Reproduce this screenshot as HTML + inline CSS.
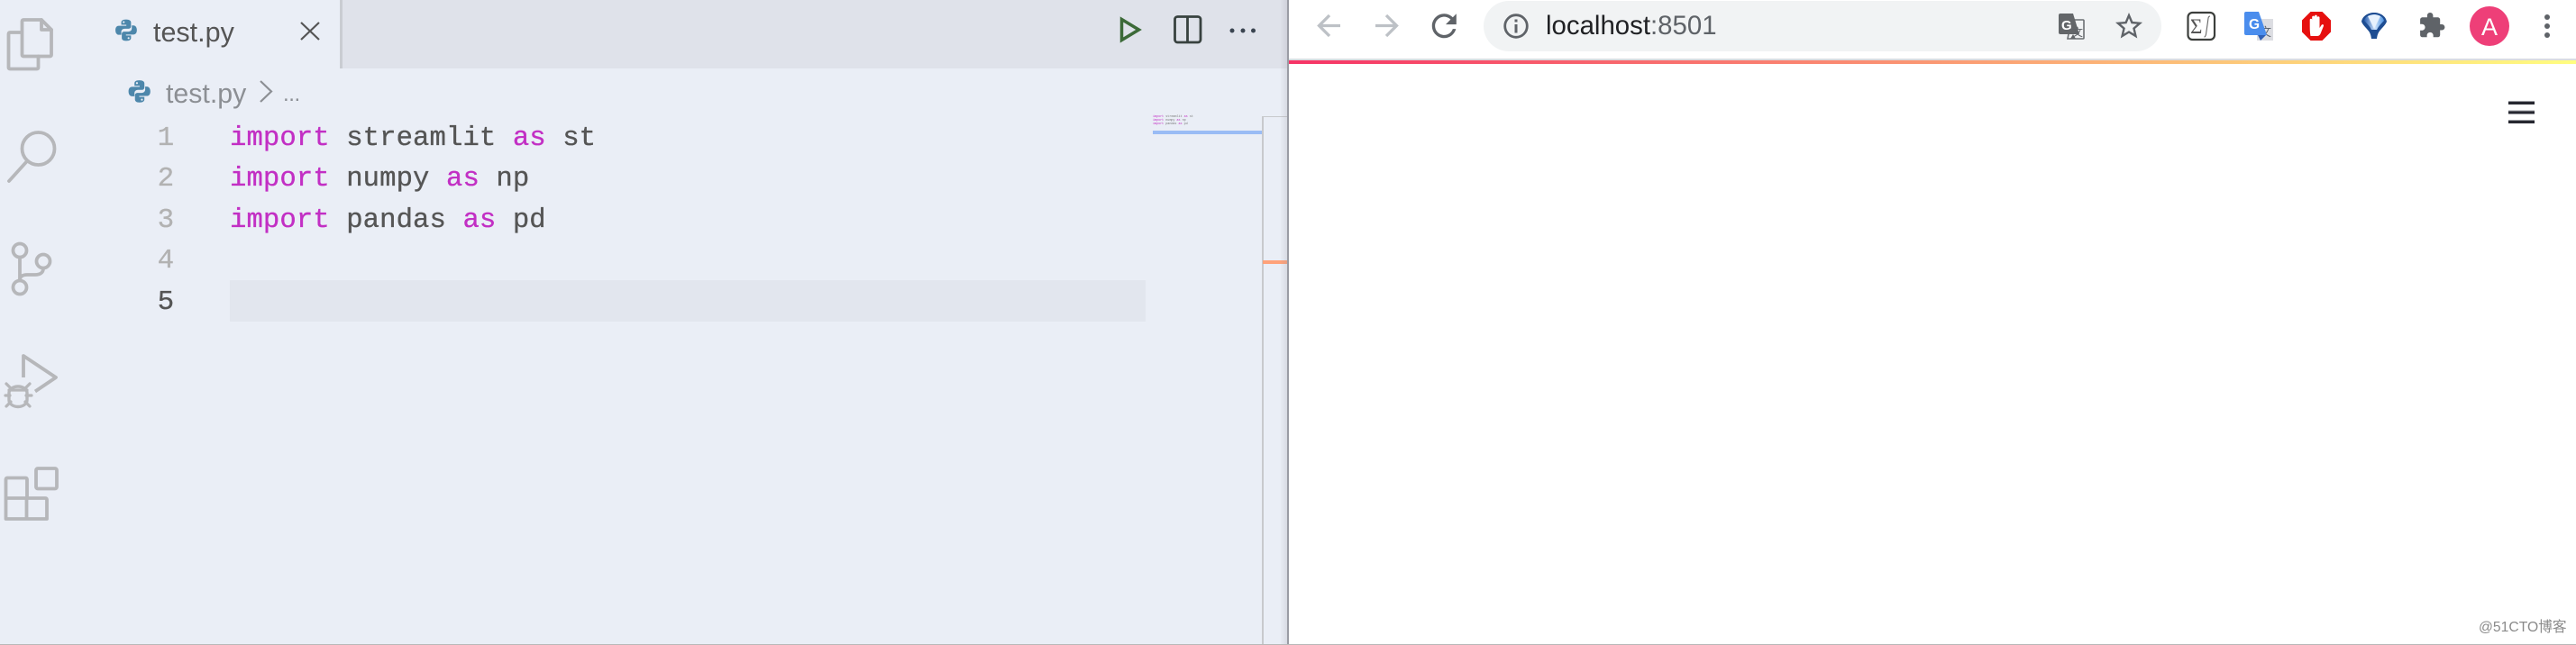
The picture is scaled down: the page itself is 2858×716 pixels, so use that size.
<!DOCTYPE html>
<html>
<head>
<meta charset="utf-8">
<style>
html,body{margin:0;padding:0;width:2858px;height:716px;overflow:hidden;background:#fff;}
.a{position:absolute;white-space:pre;}
.m{font-family:"Liberation Mono",monospace;font-size:30.6px;letter-spacing:.1px;line-height:46px;color:#555;-webkit-text-stroke:.35px currentColor;}
.k{color:#c22fc4;}
.n{color:#b2b2b2;width:40px;text-align:center;left:164px;}
.s{font-family:"Liberation Sans",sans-serif;}
.mini{font-family:"Liberation Mono",monospace;font-size:3.4px;line-height:4px;color:#777;left:1279px;}
.mini b{font-weight:normal;color:#c22fc4;}
</style>
</head>
<body>
<div class="a" style="left:0;top:0;width:1430px;height:716px;background:#eaeef6;"></div>
<div class="a" style="left:378px;top:0;width:1052px;height:76px;background:#dfe2ea;"></div>
<div class="a" style="left:377px;top:0;width:3px;height:76px;background:#c9ccd2;"></div>
<div class="a" style="left:255px;top:311px;width:1016px;height:46px;background:#e2e6ee;"></div>
<div class="a" style="left:1279px;top:145px;width:121px;height:4px;background:#9abcf5;"></div>
<div class="a" style="left:1400px;top:129px;width:1.5px;height:587px;background:#c8c9cc;"></div>
<div class="a" style="left:1400px;top:129px;width:28px;height:1px;background:#c8c9cc;"></div>
<div class="a" style="left:1401px;top:289px;width:28px;height:4px;background:#ffa27a;"></div>
<div class="a" style="left:1420px;top:0;width:8px;height:716px;background:linear-gradient(90deg,rgba(150,150,160,0),rgba(150,150,160,.22));"></div>
<div class="a" style="left:1428px;top:0;width:2px;height:716px;background:#9a9ca4;"></div>

<div class="a s" style="left:170px;top:16px;font-size:30.5px;line-height:40px;color:#555;">test.py</div>
<div class="a s" style="left:184px;top:85px;font-size:30.3px;line-height:40px;color:#8c8f94;">test.py</div>
<div class="a s" style="left:314px;top:85px;font-size:24px;line-height:40px;color:#8c8f94;letter-spacing:-.4px;">...</div>

<div class="a m n" style="top:131px;">1</div>
<div class="a m n" style="top:176px;">2</div>
<div class="a m n" style="top:222px;">3</div>
<div class="a m n" style="top:267px;">4</div>
<div class="a m n" style="top:313px;color:#555;">5</div>
<div class="a m" style="left:255px;top:131px;"><span class="k">import</span> streamlit <span class="k">as</span> st</div>
<div class="a m" style="left:255px;top:176px;"><span class="k">import</span> numpy <span class="k">as</span> np</div>
<div class="a m" style="left:255px;top:222px;"><span class="k">import</span> pandas <span class="k">as</span> pd</div>

<div class="a mini" style="top:128px;"><b>import</b> streamlit <b>as</b> st</div>
<div class="a mini" style="top:132px;"><b>import</b> numpy <b>as</b> np</div>
<div class="a mini" style="top:136px;"><b>import</b> pandas <b>as</b> pd</div>

<!-- browser -->
<div class="a" style="left:1430px;top:65px;width:1428px;height:2px;background:#dadce0;"></div>
<div class="a" style="left:1430px;top:67px;width:1428px;height:4px;background:linear-gradient(90deg,#f63366,#fffd80);"></div>
<div class="a" style="left:1646px;top:1px;width:752px;height:56px;border-radius:28px;background:#f1f3f4;"></div>
<div class="a s" style="left:1715px;top:9px;font-size:29.4px;line-height:40px;color:#202124;">localhost<span style="color:#5f6368;">:8501</span></div>

<svg class="a" style="left:0;top:0;" width="2858" height="716" viewBox="0 0 2858 716" xmlns="http://www.w3.org/2000/svg">
<defs>
<g id="py">
<path fill="#4d87ab" d="M12 1C8 1 7 2.5 7 4v2.5h5.2v1H4.5C2.5 7.5 1 9 1 12s1.500 4.800 3.500 4.800H7v-3c0-2 1.500-3.300 3.500-3.300h4c1.500 0 2.500-1 2.500-2.500V4c0-1.500-1.500-3-5-3z"/>
<path fill="#4d87ab" d="M12 23c4 0 5-1.500 5-3v-2.500h-5.200v-1h7.700c2 0 3.500-1.500 3.500-4.500s-1.500-4.800-3.500-4.800H17.800v3c0 2-1.500 3.300-3.500 3.300h-4.300C8.500 13.500 7.500 14.500 7.500 16v4c0 1.500 1 3 4.500 3z"/>
<circle cx="9.500" cy="3.800" r="1" fill="#eaeef6"/><circle cx="14.500" cy="20.200" r="1" fill="#eaeef6"/>
</g>
<linearGradient id="fn" x1="0" y1="0" x2="1" y2="0"><stop offset="0" stop-color="#2a5fb0"/><stop offset=".55" stop-color="#cfe4fb"/><stop offset="1" stop-color="#4a90e0"/></linearGradient>
</defs>

<!-- activity bar -->
<g fill="none" stroke="#b6b7ba" stroke-width="3.800" stroke-linejoin="round" stroke-linecap="round">
<path d="M26 22h20l11 11v28a1.500 1.500 0 0 1-1.500 1.500H26a1.500 1.500 0 0 1-1.500-1.500V23.500A1.500 1.500 0 0 1 26 22z"/>
<path d="M46 22v11h11"/>
<path d="M24 36H11a1.500 1.500 0 0 0-1.500 1.500V75a1.500 1.500 0 0 0 1.500 1.500h30a1.500 1.500 0 0 0 1.500-1.500V62.500"/>
<ellipse cx="42.500" cy="165" rx="18" ry="18"/>
<path d="M29 180L10 201"/>
<circle cx="22" cy="278" r="7.500"/><circle cx="22" cy="319" r="7.500"/><circle cx="48" cy="290" r="7.500"/>
<path d="M22 286v25"/><path d="M48 298c0 5-4 7-9 7H30c-5 0-8 2-8 6"/>
<path d="M26 419V395l36 24-23 15.500" stroke-linecap="butt"/>
<path d="M10 436a10 7 0 0 1 20 0v8a10 7.500 0 0 1-20 0z" stroke-width="3.400"/>
<path d="M10 433h20M6 439h5M29 439h6M7 426l5 5M33 426l-5 5M7 451l5-5M33 451l-5-5" stroke-width="3.200"/>
<rect x="40" y="520" width="23" height="22.500" rx="2"/>
<path d="M30 553v-21a1.500 1.500 0 0 0-1.500-1.500H8a1.500 1.500 0 0 0-1.500 1.500v44h45.500v-21.500a1.500 1.500 0 0 0-1.500-1.500H6.500M29.500 553v23"/>
</g>

<!-- python icons -->
<use href="#py" transform="translate(127 20.500) scale(1.080 1.080)"/>
<use href="#py" transform="translate(141.500 88) scale(1.100 1.120)"/>
<path d="M334 25l20 19M354 25l-20 19" stroke="#555" stroke-width="2.200" fill="none"/>
<path d="M289 90l12 11.500-12 11.500" stroke="#8c8f94" stroke-width="2.200" fill="none"/>

<!-- editor toolbar -->
<path d="M1244.500 21.500v23l19-11.500z" fill="none" stroke="#3c6a38" stroke-width="3.500"/>
<rect x="1303.500" y="18.500" width="28.500" height="28.500" rx="3" fill="none" stroke="#38423f" stroke-width="2.800"/>
<path d="M1317.500 18v29" stroke="#38423f" stroke-width="2.800"/>
<circle cx="1367" cy="34" r="2.500" fill="#3a4450"/><circle cx="1379" cy="34" r="2.500" fill="#3a4450"/><circle cx="1390.500" cy="34" r="2.500" fill="#3a4450"/>

<!-- nav -->
<g fill="none" stroke="#bdc1c6" stroke-width="3.300">
<path d="M1487 28.500h-23M1475 17l-11.500 11.500L1475 40"/>
<path d="M1526 28.500h23M1538 17l11.500 11.500L1538 40"/>
</g>
<path transform="translate(1582 8.500) scale(1.690)" fill="#5f6368" d="M17.650 6.350C16.200 4.900 14.210 4 12 4c-4.420 0-7.990 3.580-7.990 8s3.570 8 7.990 8c3.730 0 6.840-2.550 7.730-6h-2.080c-.82 2.330-3.040 4-5.650 4-3.310 0-6-2.690-6-6s2.690-6 6-6c1.660 0 3.140.69 4.220 1.780L13 11h7V4l-2.350 2.350z"/>
<circle cx="1682" cy="29" r="12.300" fill="none" stroke="#5f6368" stroke-width="2.800"/>
<rect x="1680.500" y="27" width="3" height="9.500" fill="#5f6368"/><rect x="1680.500" y="21.500" width="3" height="3" fill="#5f6368"/>

<!-- translate icon -->
<path d="M2298 22h13a1 1 0 0 1 1 1v19a1 1 0 0 1-1 1h-17z" fill="#f1f3f4" stroke="#6b6f73" stroke-width="1.600"/>
<path d="M2286 15h14l7 23h-21a2 2 0 0 1-2-2V17a2 2 0 0 1 2-2z" fill="#636669"/>
<path d="M2300 38l3 5h-6z" fill="#636669"/>
<text x="2287" y="33" font-family="Liberation Sans" font-weight="bold" font-size="15" fill="#fff">G</text>
<text x="2299" y="40" font-family="Noto Sans CJK SC" font-size="12" fill="#5f6368">文</text>
<path transform="translate(2344 11) scale(1.500)" fill="#5f6368" d="M22 9.240l-7.190-.62L12 2 9.190 8.630 2 9.240l5.460 4.730L5.820 21 12 17.270 18.180 21l-1.630-7.030L22 9.240zM12 15.400l-3.760 2.270 1-4.280-3.320-2.880 4.380-.38L12 6.100l1.710 4.040 4.380.38-3.320 2.880 1 4.280L12 15.400z"/>

<!-- sigma ext -->
<rect x="2427.500" y="14" width="29.500" height="30" rx="5" fill="#fff" stroke="#3c3f3c" stroke-width="2.200"/>
<text x="2430" y="37" font-family="Liberation Serif" font-size="23" fill="#555">Σ</text>
<path d="M2452 18c-2 0-2 2-2.500 6l-2 14c-.4 2-1 3-2 3" fill="none" stroke="#666" stroke-width="1.100"/>

<!-- google translate -->
<rect x="2504" y="21" width="18" height="24" fill="#dcdde2"/>
<text x="2507" y="40" font-family="Noto Sans CJK SC" font-size="13" fill="#5d6570">文</text>
<path d="M2490 15a2 2 0 0 1 2-2h14l9 26h-23a2 2 0 0 1-2-2z" fill="#4a8ded"/>
<path d="M2505 39h9l-6 6z" fill="#2f5fb5"/>
<text x="2495" y="32" font-family="Liberation Sans" font-weight="bold" font-size="15.500" fill="#fff">G</text>

<!-- adblock -->
<path d="M2563.500 13h13l9.500 9.500v13l-9.500 9.500h-13l-9.500-9.500v-13z" fill="#e6100f"/>
<path d="M2563.500 40c-.6-3-.8-7-.8-10V22c0-1.700 2.500-1.700 2.500 0v-3c0-1.800 2.800-1.800 2.800 0v-1c0-1.800 2.800-1.800 2.800 0v1.500c0-1.700 2.700-1.700 2.700 0V31l2-3c1.100-1.600 3-.7 2.400 1l-3 7.500c-.7 2-1.800 3.500-4 3.500z" fill="#fff"/>

<!-- funnel -->
<path d="M2620 24c1-6 7-10 14-10s13 4 14 10c-1.500 4-5 6.500-8 10.500-2 2.700-2.500 5-3 8.500h-6c-.5-3.500-1-5.800-3-8.500-3-4-6.500-6.500-8-10.500z" fill="#1e4d92"/>
<path d="M2623 23c1-4.500 6-7 11-7s10 2.500 11 7c-3 3-6 6-8 10h-6c-2-4-5-7-8-10z" fill="url(#fn)"/>
<path d="M2627 18l7 14 7-14c-4-2-10-2-14 0z" fill="#e8f2fd"/>

<!-- puzzle -->
<path transform="translate(2682.500 12.700) scale(1.300)" fill="#5f6368" d="M20.500 11H19V7c0-1.100-.9-2-2-2h-4V3.500C13 2.120 11.880 1 10.500 1S8 2.120 8 3.500V5H4c-1.100 0-1.990.9-1.990 2v3.800H3.500c1.490 0 2.700 1.210 2.700 2.700s-1.210 2.700-2.700 2.700H2V20c0 1.100.9 2 2 2h3.800v-1.500c0-1.490 1.210-2.700 2.700-2.700 1.490 0 2.700 1.210 2.700 2.700V22H17c1.100 0 2-.9 2-2v-4h1.500c1.380 0 2.500-1.120 2.500-2.500S21.880 11 20.500 11z"/>

<!-- avatar -->
<circle cx="2762" cy="29" r="22" fill="#ee3f78"/>
<text x="2762" y="39" text-anchor="middle" font-family="Liberation Sans" font-size="27" fill="#fff">A</text>
<circle cx="2826" cy="19" r="3" fill="#5f6368"/><circle cx="2826" cy="29" r="3" fill="#5f6368"/><circle cx="2826" cy="39" r="3" fill="#5f6368"/>

<!-- hamburger -->
<g fill="#262730">
<rect x="2783" y="112.500" width="29" height="3.500"/><rect x="2783" y="123" width="29" height="3.500"/><rect x="2783" y="133.500" width="29" height="3.500"/>
</g>
<g fill="#9a9ba0">
<rect x="2783" y="112" width="29" height="1"/><rect x="2783" y="122.500" width="29" height="1"/><rect x="2783" y="133" width="29" height="1"/>
</g>
</svg>

<div class="a s" style="left:2750px;top:687px;font-family:'Liberation Sans','Noto Sans CJK SC',sans-serif;font-size:15.700px;line-height:20px;color:#8a8a8a;">@51CTO博客</div>
<div class="a" style="left:0;top:715px;width:2858px;height:1px;background:#b8b8b8;"></div>
</body>
</html>
